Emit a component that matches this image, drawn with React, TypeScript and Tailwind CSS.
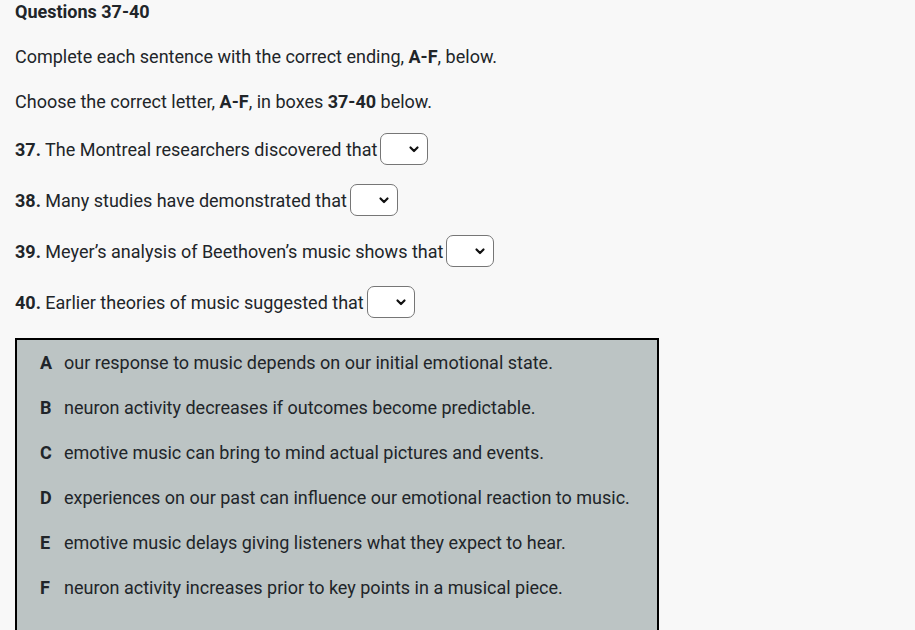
const options = [
  { letter: "A", text: "our response to music depends on our initial emotional state." },
  { letter: "B", text: "neuron activity decreases if outcomes become predictable." },
  { letter: "C", text: "emotive music can bring to mind actual pictures and events." },
  { letter: "D", text: "experiences on our past can influence our emotional reaction to music." },
  { letter: "E", text: "emotive music delays giving listeners what they expect to hear." },
  { letter: "F", text: "neuron activity increases prior to key points in a musical piece." },
];

const questions = [
  { num: "37.", text: "The Montreal researchers discovered that" },
  { num: "38.", text: "Many studies have demonstrated that" },
  { num: "39.", text: "Meyer\u2019s analysis of Beethoven\u2019s music shows that" },
  { num: "40.", text: "Earlier theories of music suggested that" },
];

const Select = () => (
  <span className="ml-[3px] inline-flex h-[32px] w-[48px] items-center justify-end rounded-[7px] border border-[#767676] bg-white pr-[7px]">
    <svg className="h-[12px] w-[12px]" viewBox="0 0 12 12" fill="none" stroke="#111" strokeWidth="2.2">
      <path d="M2.5 4.5l3.5 3.5 3.5-3.5" strokeLinecap="round" strokeLinejoin="round" />
    </svg>
  </span>
);

export default function App() {
  return (
    <div className="min-h-[630px] bg-[#f8f8f8] px-[15px] font-['Roboto',sans-serif] text-[18px] text-[#212529]">
      <h2 className="text-[18px] font-bold leading-[24px]">Questions 37-40</h2>

      <p className="mt-[21px] leading-[24px]">
        Complete each sentence with the correct ending, <b>A-F</b>, below.
      </p>
      <p className="mt-[21px] leading-[24px]">
        Choose the correct letter, <b>A-F</b>, in boxes <b>37-40</b> below.
      </p>

      <div className="mt-[19px] flex flex-col gap-[19px]">
        {questions.map((q) => (
          <div key={q.num} className="flex h-[32px] items-center">
            <span>
              <b>{q.num}</b> {q.text}
            </span>
            <Select />
          </div>
        ))}
      </div>

      <div className="mt-[20px] w-[644px] border-2 border-black bg-[#bcc4c4] pb-[40px] pl-[23px]">
        {options.map((o) => (
          <div key={o.letter} className="flex h-[45px] items-center">
            <b className="w-[24px]">{o.letter}</b>
            <span>{o.text}</span>
          </div>
        ))}
      </div>
    </div>
  );
}
